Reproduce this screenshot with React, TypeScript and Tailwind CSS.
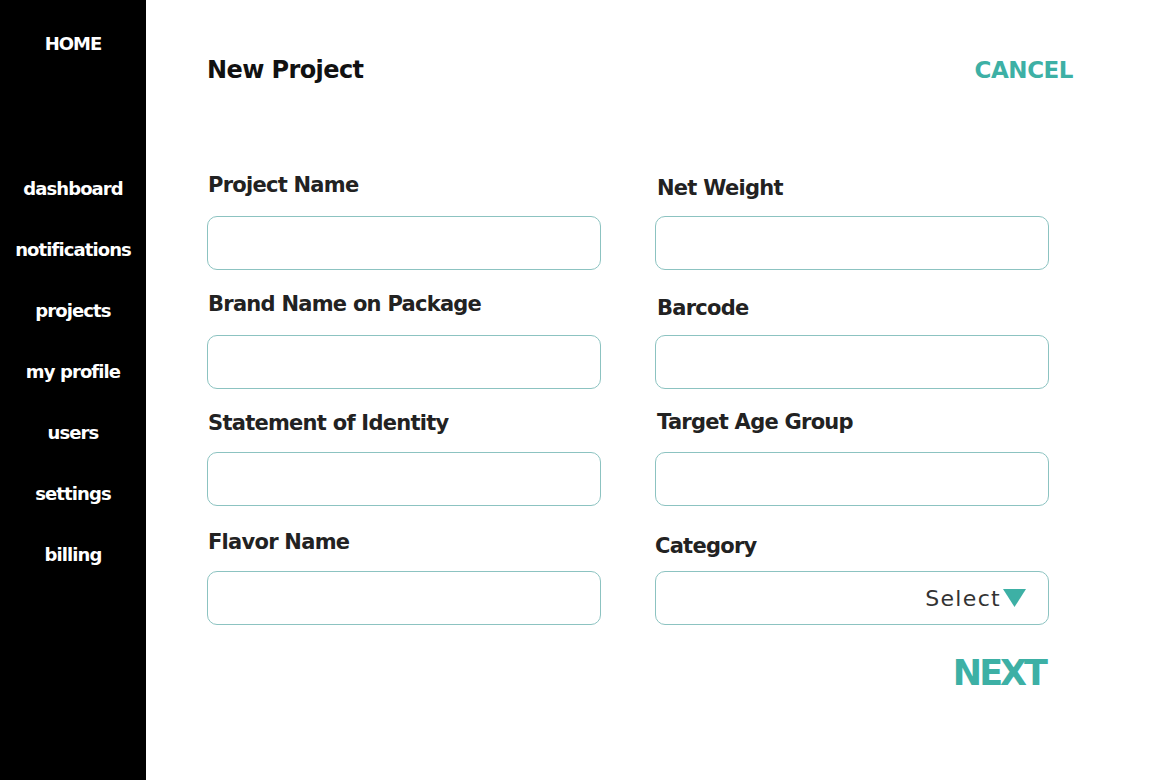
import { useState } from "react";

const NAV = ["dashboard", "notifications", "projects", "my profile", "users", "settings", "billing"];

function Field({ label, labelClass, inputClass }: { label: string; labelClass: string; inputClass: string }) {
  return (
    <>
      <label className={`block h-6 leading-6 text-[21px] font-bold tracking-[-0.035em] text-[#222] ${labelClass}`}>{label}</label>
      <input className={`block w-full h-[54px] rounded-[10px] border border-[#8cc3c1] bg-white px-3 outline-none ${inputClass}`} />
    </>
  );
}

export default function App() {
  const [open, setOpen] = useState(false);

  return (
    <div className="flex w-[1170px] h-[780px] bg-white font-['DejaVu_Sans',sans-serif]">
      {/* sidebar */}
      <aside className="w-[146px] shrink-0 bg-black text-white">
        <div className="pt-[32px] h-[56px] leading-6 text-center text-[18px] font-bold tracking-[-0.06em]">HOME</div>
        <nav className="mt-[102px] flex flex-col">
          {NAV.map((n) => (
            <a key={n} className="h-[61px] flex items-center justify-center text-[18px] font-bold tracking-[-0.05em]">
              {n}
            </a>
          ))}
        </nav>
      </aside>

      {/* main */}
      <main className="flex-1 pl-[61px] pr-[97px]">
        <header className="flex items-center justify-between pt-[52px] h-[88px]">
          <h1 className="leading-9 text-[24px] font-bold tracking-[-0.025em] text-[#111]">New Project</h1>
          <button className="leading-9 text-[23px] font-bold tracking-[-0.02em] text-[#3db0a5]">CANCEL</button>
        </header>

        <div className="grid grid-cols-[394px_394px] gap-x-[54px] pt-[72px]">
          <div>
            <Field label="Project Name" labelClass="mt-[13px] pl-px" inputClass="mt-[19px]" />
            <Field label="Brand Name on Package" labelClass="mt-[22px] pl-px" inputClass="mt-[19px]" />
            <Field label="Statement of Identity" labelClass="mt-[22px] pl-px" inputClass="mt-[17px]" />
            <Field label="Flavor Name" labelClass="mt-[24px] pl-px" inputClass="mt-[17px]" />
          </div>
          <div>
            <Field label="Net Weight" labelClass="mt-[16px] pl-[2px]" inputClass="mt-[16px]" />
            <Field label="Barcode" labelClass="mt-[26px] pl-[2px]" inputClass="mt-[15px]" />
            <Field label="Target Age Group" labelClass="mt-[21px] pl-[2px]" inputClass="mt-[18px]" />
            <label className="block mt-[28px] h-6 leading-6 text-[21px] font-bold tracking-[-0.035em] text-[#222]">Category</label>
            <button
              onClick={() => setOpen(!open)}
              className="mt-[13px] flex w-full h-[54px] items-center justify-end rounded-[10px] border border-[#8cc3c1] bg-white pr-[22px]"
            >
              <span className="text-[22px] tracking-[0.06em] text-[#333]">Select</span>
              <svg width="23" height="18" viewBox="0 0 23 18" className="ml-[2px]">
                <path d="M0 0 H23 L11.5 18 Z" fill="#3db0a5" />
              </svg>
            </button>
            <div className="flex justify-end mt-[28px] pr-[4px]">
              <button className="leading-10 text-[35px] font-bold tracking-[-0.085em] text-[#3db0a5]">NEXT</button>
            </div>
          </div>
        </div>
      </main>
    </div>
  );
}
